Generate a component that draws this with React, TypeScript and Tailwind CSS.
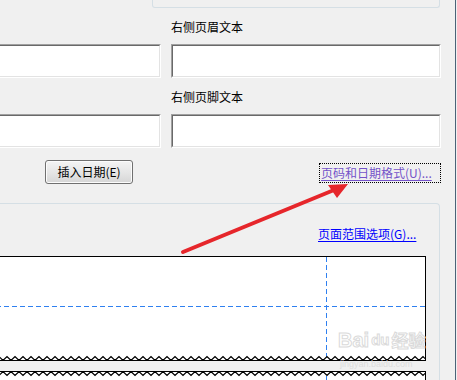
import React from 'react'

const FONT = "font-['Microsoft_YaHei','Noto_Sans_CJK_SC',sans-serif]"

function TextBox({ className = '' }: { className?: string }) {
  // classic sunken edit box: dark top/left, light bottom/right
  return (
    <div className={`h-[34px] shrink-0 border-t border-l border-[#a0a0a0] border-b border-r border-b-white border-r-white ${className}`}>
      <div className="h-full bg-white border-t border-l border-[#696969] border-b border-r border-b-[#e3e3e3] border-r-[#e3e3e3]" />
    </div>
  )
}

function Zigzag({ up, width }: { up: boolean; width: number }) {
  const pts: string[] = []
  for (let x = 0; x < width; x += 8) {
    if (up) pts.push(`${x},3.5`, `${x + 3},0.5`, `${x + 6},3.5`, `${x + 8},3.5`)
    else pts.push(`${x},0.5`, `${x + 3},3.5`, `${x + 6},0.5`, `${x + 8},0.5`)
  }
  return <polyline points={pts.join(' ')} fill="none" stroke="#000" strokeWidth="1.2" />
}

export default function App() {
  return (
    <div className={`flex w-[457px] h-[380px] overflow-hidden bg-[#f0f0f0] text-[12px] text-black ${FONT}`}>
      <div className="relative flex flex-col w-[455px] shrink-0 overflow-hidden">
        {/* tail of the group box above */}
        <div className="shrink-0 ml-[152px] w-[288px] h-[8px] border-x border-b border-[#d5dfe5] rounded-b-[3px]" />

        {/* header row */}
        <div className="shrink-0 flex mt-[11px]">
          <div className="w-[161px]" />
          <div className="ml-[10px] h-[16px] leading-[16px]">右侧页眉文本</div>
        </div>
        <div className="shrink-0 flex mt-[9px]">
          <TextBox className="-ml-[10px] w-[171px]" />
          <TextBox className="ml-[10px] w-[270px]" />
        </div>

        {/* footer row */}
        <div className="shrink-0 flex mt-[11px]">
          <div className="w-[161px]" />
          <div className="ml-[10px] h-[16px] leading-[16px]">右侧页脚文本</div>
        </div>
        <div className="shrink-0 flex mt-[9px]">
          <TextBox className="-ml-[10px] w-[171px]" />
          <TextBox className="ml-[10px] w-[270px]" />
        </div>

        {/* buttons */}
        <div className="shrink-0 flex items-start mt-[12px]">
          <button className="ml-[45px] w-[88px] h-[24px] rounded-[3px] border border-[#707070] bg-gradient-to-b from-[#f4f4f4] via-[#e6e6e6] to-[#d6d6d6] shadow-[inset_0_0_0_1px_#fcfcfc] leading-[20px] text-center">
            插入日期(E)
          </button>
          <div className="ml-[186px] mt-[3px] w-[122px] h-[20px] border border-dotted border-black pl-[1px] leading-[18px]">
            <span className="text-[#7453c9] underline underline-offset-[2px]">页码和日期格式(U)...</span>
          </div>
        </div>

        {/* preview group box */}
        <div className="shrink-0 -ml-[4px] mt-[19px] w-[444px] h-[200px] border-t border-r border-[#d5dfe5] rounded-tr-[4px] flex flex-col">
          <div className="shrink-0 ml-[322px] mt-[22px] h-[16px] leading-[16px]">
            <span className="text-[#0000ff] underline underline-offset-[2px]">页面范围选项(G)...</span>
          </div>

          <div className="shrink-0 mt-[14px] w-[430px] h-[105px] border-t border-r border-b border-black bg-white">
            <svg width="429" height="103" className="block">
              <line x1="330.5" y1="0" x2="330.5" y2="100" stroke="#2f80f0" strokeDasharray="5 3" />
              <line x1="0" y1="49.5" x2="429" y2="49.5" stroke="#2f80f0" strokeDasharray="5 3" />
              <g transform="translate(0 99)">
                <Zigzag up width={429} />
              </g>
            </svg>
          </div>

          <div className="shrink-0 mt-[10px] w-[430px] h-[30px] border-t border-r border-black bg-white">
            <svg width="429" height="29" className="block">
              <Zigzag up={false} width={429} />
              <line x1="330.5" y1="4" x2="330.5" y2="29" stroke="#2f80f0" strokeDasharray="5 3" />
            </svg>
          </div>
        </div>

        {/* watermark */}
        <div className="absolute left-[338px] top-[328px] flex items-center gap-[2px] text-[20px] font-bold leading-[24px] text-white/60 [-webkit-text-stroke:1px_#dadada] font-['Liberation_Sans',sans-serif] pointer-events-none">
          <span>Bai</span>
          <span className="text-[15px]">du</span>
          <span className={`text-[17px] ${FONT}`}>经验</span>
        </div>
        <div className="absolute left-[340px] top-[359px] text-[9px] leading-[10px] text-[#dcdcdc] font-['Liberation_Sans',sans-serif] pointer-events-none">
          jingyan.baidu.com
        </div>

        {/* red arrow annotation */}
        <svg width="455" height="380" className="absolute left-0 top-0 pointer-events-none">
          <line x1="183" y1="252" x2="334" y2="190" stroke="#e6262b" strokeWidth="4" strokeLinecap="round" />
          <polygon points="348,184 328,185 337,198" fill="#e6262b" />
        </svg>
      </div>
      <div className="w-px bg-[#4a6378]" />
      <div className="w-px" />
    </div>
  )
}
